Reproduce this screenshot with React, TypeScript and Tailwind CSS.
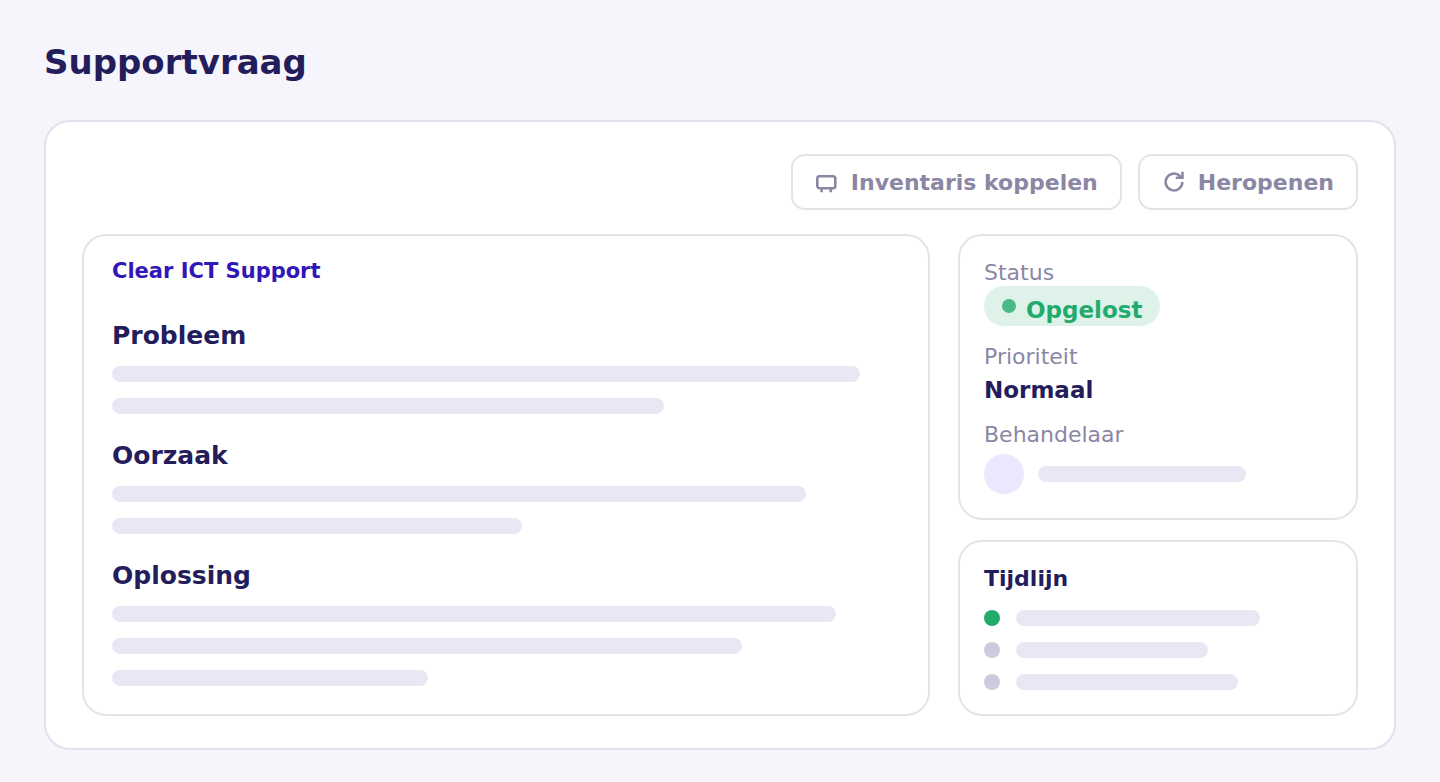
import type { ReactNode } from 'react';

const sections = [
  { title: 'Probleem', bars: ['w-[748px]', 'w-[552px]'] },
  { title: 'Oorzaak', bars: ['w-[694px]', 'w-[410px]'] },
  { title: 'Oplossing', bars: ['w-[724px]', 'w-[630px]', 'w-[316px]'] },
];

const timeline = [
  { dot: 'bg-[#22ab6c]', bar: 'w-[244px]' },
  { dot: 'bg-[#cdcae0]', bar: 'w-[192px]' },
  { dot: 'bg-[#cdcae0]', bar: 'w-[222px]' },
];

function Bar({ width }: { width: string }) {
  return <div className={`h-4 max-w-full rounded-full bg-[#e9e7f3] ${width}`} />;
}

function Panel({ className, children }: { className: string; children: ReactNode }) {
  return <section className={`rounded-3xl border-2 border-[#e4e3ea] bg-white ${className}`}>{children}</section>;
}

function ActionButton({ icon, label }: { icon: ReactNode; label: string }) {
  return (
    <button
      type="button"
      className="flex h-14 items-center gap-3 rounded-[14px] border-2 border-[#e4e3ea] bg-white px-[22px] text-[22px] font-bold text-[#8a87a5]"
    >
      {icon}
      {label}
    </button>
  );
}

function DeviceIcon() {
  return (
    <svg width="24" height="24" viewBox="0 0 24 24" fill="none" stroke="currentColor" strokeWidth="2.6" aria-hidden="true">
      <rect x="2.3" y="6.3" width="18" height="12" rx="2.2" />
      <path d="M6.6 18.3V22.2M15.8 18.3V22.2" />
    </svg>
  );
}

function ReopenIcon() {
  return (
    <svg width="24" height="24" viewBox="0 0 24 24" fill="none" stroke="currentColor" strokeWidth="2.5" aria-hidden="true">
      <path d="M20.4 12A8.4 8.4 0 1 1 17.9 6L19.4 7.6" />
      <path d="M20.5 1.8V7.8H13.8" />
    </svg>
  );
}

export default function App() {
  return (
    <main className="min-h-screen bg-[#f5f5fb] px-11 pt-10 pb-8 font-['DejaVu_Sans',sans-serif] text-[#231e5b]">
      <h1 className="mb-9 text-[34px] leading-[44px] font-bold">Supportvraag</h1>

      <div className="rounded-[26px] border-2 border-[#e2e1ec] bg-white px-9 py-8">
        <div className="mb-6 flex flex-wrap justify-end gap-4">
          <ActionButton icon={<DeviceIcon />} label="Inventaris koppelen" />
          <ActionButton icon={<ReopenIcon />} label="Heropenen" />
        </div>

        <div className="flex gap-7">
          <Panel className="min-w-0 flex-1 px-7 pt-[22px] pb-7">
            <p className="mb-9 text-[21px] leading-[26px] font-bold text-[#3217b8]">Clear ICT Support</p>
            <div className="flex flex-col gap-[26px]">
              {sections.map((section) => (
                <div key={section.title}>
                  <h2 className="mb-[14px] text-[25px] leading-8 font-bold">{section.title}</h2>
                  <div className="flex flex-col gap-4">
                    {section.bars.map((width) => (
                      <Bar key={width} width={width} />
                    ))}
                  </div>
                </div>
              ))}
            </div>
          </Panel>

          <aside className="flex w-[400px] shrink-0 flex-col gap-5 text-[22px] leading-[26px]">
            <Panel className="p-6">
              <dl className="flex flex-col gap-[18px]">
                <div>
                  <dt className="text-[#8a87a5]">Status</dt>
                  <dd className="flex w-fit items-center gap-[10px] rounded-full bg-[#dff2e9] px-[18px]">
                    <span className="size-[14px] rounded-full bg-[#4bb985]" />
                    <span className="pt-2 text-[23px] leading-8 font-bold text-[#22ab6c]">Opgelost</span>
                  </dd>
                </div>
                <div>
                  <dt className="text-[#8a87a5]">Prioriteit</dt>
                  <dd className="mt-[6px] text-[23px] leading-7 font-bold">Normaal</dd>
                </div>
                <div>
                  <dt className="text-[#8a87a5]">Behandelaar</dt>
                  <dd className="mt-[6px] flex items-center gap-[14px]">
                    <span className="size-10 shrink-0 rounded-full bg-[#ebe7ff]" />
                    <Bar width="w-[208px]" />
                  </dd>
                </div>
              </dl>
            </Panel>

            <Panel className="p-6">
              <h2 className="mb-[18px] font-bold">Tijdlijn</h2>
              <ul className="flex flex-col gap-4">
                {timeline.map((item) => (
                  <li key={item.bar} className="flex items-center gap-4">
                    <span className={`size-4 shrink-0 rounded-full ${item.dot}`} />
                    <Bar width={item.bar} />
                  </li>
                ))}
              </ul>
            </Panel>
          </aside>
        </div>
      </div>
    </main>
  );
}
